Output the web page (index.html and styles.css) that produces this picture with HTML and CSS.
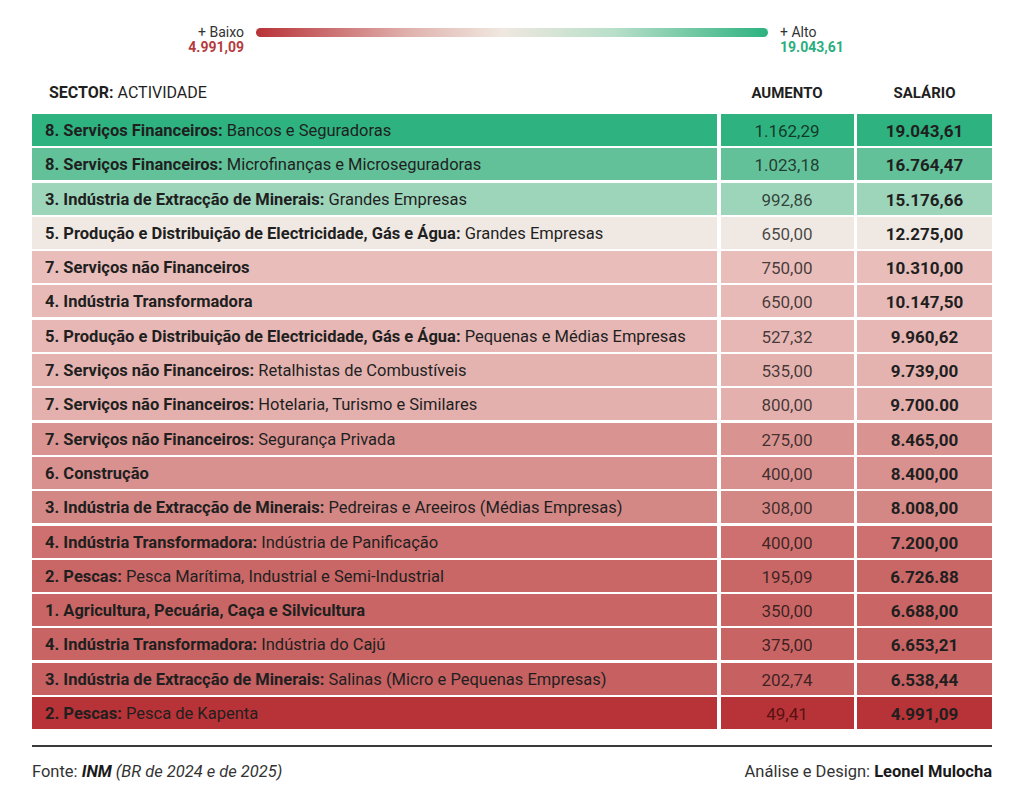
FILE: index.html
```html
<!DOCTYPE html>
<html lang="pt">
<head>
<meta charset="utf-8">
<title>Salários mínimos por sector</title>
<link rel="stylesheet" href="styles.css">
</head>
<body>
<div class="page">
  <div class="legend">
    <div class="legend-end left">
      <span class="legend-label">+ Baixo</span>
      <span class="legend-value low">4.991,09</span>
    </div>
    <div class="legend-bar"></div>
    <div class="legend-end right">
      <span class="legend-label">+ Alto</span>
      <span class="legend-value high">19.043,61</span>
    </div>
  </div>

  <div class="head">
    <div class="th th-sector"><b>SECTOR:</b> ACTIVIDADE</div>
    <div class="th th-num">AUMENTO</div>
    <div class="th th-num">SALÁRIO</div>
  </div>

  <div class="table">
    <div class="c s c1"><b>8. Serviços Financeiros:</b> Bancos e Seguradoras</div>
    <div class="c a c1">1.162,29</div>
    <div class="c v c1">19.043,61</div>

    <div class="c s c2"><b>8. Serviços Financeiros:</b> Microfinanças e Microseguradoras</div>
    <div class="c a c2">1.023,18</div>
    <div class="c v c2">16.764,47</div>

    <div class="c s c3"><b>3. Indústria de Extracção de Minerais:</b> Grandes Empresas</div>
    <div class="c a c3">992,86</div>
    <div class="c v c3">15.176,66</div>

    <div class="c s c4"><b>5. Produção e Distribuição de Electricidade, Gás e Água:</b> Grandes Empresas</div>
    <div class="c a c4">650,00</div>
    <div class="c v c4">12.275,00</div>

    <div class="c s c5"><b>7. Serviços não Financeiros</b></div>
    <div class="c a c5">750,00</div>
    <div class="c v c5">10.310,00</div>

    <div class="c s c6"><b>4. Indústria Transformadora</b></div>
    <div class="c a c6">650,00</div>
    <div class="c v c6">10.147,50</div>

    <div class="c s c7"><b>5. Produção e Distribuição de Electricidade, Gás e Água:</b> Pequenas e Médias Empresas</div>
    <div class="c a c7">527,32</div>
    <div class="c v c7">9.960,62</div>

    <div class="c s c8"><b>7. Serviços não Financeiros:</b> Retalhistas de Combustíveis</div>
    <div class="c a c8">535,00</div>
    <div class="c v c8">9.739,00</div>

    <div class="c s c9"><b>7. Serviços não Financeiros:</b> Hotelaria, Turismo e Similares</div>
    <div class="c a c9">800,00</div>
    <div class="c v c9">9.700.00</div>

    <div class="c s c10"><b>7. Serviços não Financeiros:</b> Segurança Privada</div>
    <div class="c a c10">275,00</div>
    <div class="c v c10">8.465,00</div>

    <div class="c s c11"><b>6. Construção</b></div>
    <div class="c a c11">400,00</div>
    <div class="c v c11">8.400,00</div>

    <div class="c s c12"><b>3. Indústria de Extracção de Minerais:</b> Pedreiras e Areeiros (Médias Empresas)</div>
    <div class="c a c12">308,00</div>
    <div class="c v c12">8.008,00</div>

    <div class="c s c13"><b>4. Indústria Transformadora:</b> Indústria de Panificação</div>
    <div class="c a c13">400,00</div>
    <div class="c v c13">7.200,00</div>

    <div class="c s c14"><b>2. Pescas:</b> Pesca Marítima, Industrial e Semi-Industrial</div>
    <div class="c a c14">195,09</div>
    <div class="c v c14">6.726.88</div>

    <div class="c s c15"><b>1. Agricultura, Pecuária, Caça e Silvicultura</b></div>
    <div class="c a c15">350,00</div>
    <div class="c v c15">6.688,00</div>

    <div class="c s c16"><b>4. Indústria Transformadora:</b> Indústria do Cajú</div>
    <div class="c a c16">375,00</div>
    <div class="c v c16">6.653,21</div>

    <div class="c s c17"><b>3. Indústria de Extracção de Minerais:</b> Salinas (Micro e Pequenas Empresas)</div>
    <div class="c a c17">202,74</div>
    <div class="c v c17">6.538,44</div>

    <div class="c s c18"><b>2. Pescas:</b> Pesca de Kapenta</div>
    <div class="c a c18">49,41</div>
    <div class="c v c18">4.991,09</div>
  </div>

  <div class="rule"></div>

  <div class="footer">
    <div class="source">Fonte: <b><i>INM</i></b> <i>(BR de 2024 e de 2025)</i></div>
    <div class="credit">Análise e Design: <b>Leonel Mulocha</b></div>
  </div>
</div>
</body>
</html>
```

FILE: styles.css
```css
html, body {
  margin: 0;
  padding: 0;
  background: #ffffff;
}

body {
  font-family: "Roboto", "Liberation Sans", sans-serif;
  color: #1f1f1f;
}

.page {
  width: 960px;
  padding: 0 0 0 32px;
}

/* Legend */
.legend {
  display: flex;
  align-items: flex-start;
  padding-top: 25px;
  height: 37px;
}

.legend-end {
  display: flex;
  flex-direction: column;
  font-size: 14px;
  line-height: 15px;
}

.legend-end.left {
  width: 212px;
  align-items: flex-end;
}

.legend-end.right {
  padding-left: 12px;
  align-items: flex-start;
}

.legend-label {
  color: #333333;
}

.legend-value {
  font-weight: 700;
}

.legend-value.low {
  color: #b63b3e;
}

.legend-value.high {
  color: #2aae80;
}

.legend-bar {
  width: 512px;
  height: 9px;
  margin: 3px 0 0 12px;
  border-radius: 5px;
  background: linear-gradient(to right, #b83237 0%, #e0b2ae 30%, #f0e8e0 48%, #b8dfc9 70%, #2db27f 100%);
}

/* Header */
.head {
  display: grid;
  grid-template-columns: 685px 133px 135px;
  column-gap: 3.5px;
  height: 42px;
  padding-top: 10px;
  align-items: center;
}

.th {
  font-size: 15px;
  line-height: 20px;
}

.th-sector {
  padding-left: 17px;
  font-size: 16px;
  font-weight: 400;
}

.th-sector b {
  font-weight: 700;
}

.th-num {
  text-align: center;
  font-weight: 700;
}

/* Table */
.table {
  display: grid;
  grid-template-columns: 685px 133px 135px;
  grid-auto-rows: 32px;
  column-gap: 3.5px;
  row-gap: 2.3px;
}

.c {
  font-size: 16.5px;
  line-height: 32px;
  padding-top: 1px;
  box-sizing: border-box;
  white-space: nowrap;
  overflow: hidden;
}

.c b {
  font-weight: 700;
}

.s {
  padding-left: 13px;
}

.a {
  text-align: center;
  font-size: 17px;
  color: rgba(10, 10, 10, 0.74);
  font-weight: 400;
}

.v {
  text-align: center;
  font-size: 17px;
  font-weight: 700;
}

.c1 { background: #2eb27f; }
.c2 { background: #62c199; }
.c3 { background: #9dd5bb; }
.c4 { background: #f0e9e3; }
.c5 { background: #e8bdba; }
.c6 { background: #e7bab7; }
.c7 { background: #e6b7b4; }
.c8 { background: #e4b3b0; }
.c9 { background: #e3b0ad; }
.c10 { background: #d99492; }
.c11 { background: #d8918f; }
.c12 { background: #d48886; }
.c13 { background: #cd706f; }
.c14 { background: #c96766; }
.c15 { background: #c96665; }
.c16 { background: #c86463; }
.c17 { background: #c66061; }
.c18 { background: #b73337; }

.a.c18 { color: rgba(40, 0, 0, 0.68); }

/* Footer */
.rule {
  height: 2px;
  background: #3a3a3a;
  margin-top: 16px;
}

.footer {
  display: flex;
  justify-content: space-between;
  align-items: center;
  margin-top: 15px;
  font-size: 16.5px;
  line-height: 20px;
  color: #333333;
}

.footer b {
  color: #1a1a1a;
}
```
